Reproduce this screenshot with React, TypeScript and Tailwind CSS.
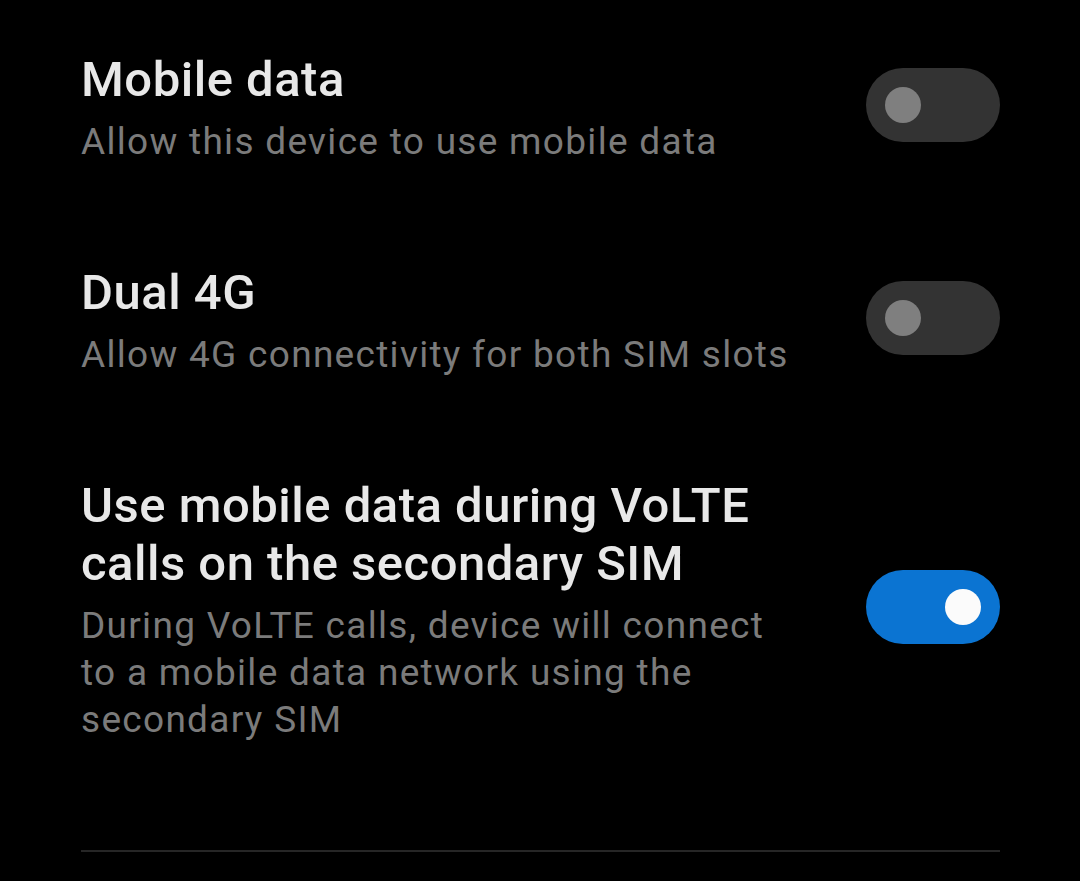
import React from 'react';

interface SettingRowProps {
  title: string;
  description: string;
  checked: boolean;
  className?: string;
}

const Toggle = ({ checked }: { checked: boolean }) => (
  <div
    className={`mb-[6px] flex h-[74px] w-[134px] shrink-0 items-center rounded-full px-[19px] ${
      checked ? 'justify-end bg-[#0b74d2]' : 'justify-start bg-[#333333]'
    }`}
  >
    <span
      className={`block h-[36px] w-[36px] rounded-full ${checked ? 'bg-[#fbfbfb]' : 'bg-[#7f7f7f]'}`}
    />
  </div>
);

const SettingRow = ({ title, description, checked, className }: SettingRowProps) => (
  <div className={`flex items-center justify-between ${className ?? ''}`}>
    <div className="w-[720px]">
      <h2 className="text-[49px] font-medium leading-[58px] tracking-[0.5px] text-[#e8e8e8]">{title}</h2>
      <p className="mt-[9px] text-[37px] leading-[47px] tracking-[1.3px] text-[#7b7b7b]">{description}</p>
    </div>
    <Toggle checked={checked} />
  </div>
);

export default function App() {
  return (
    <div
      className="h-[881px] w-[1080px] overflow-hidden bg-black pl-[81px] pr-[80px] pt-[51px]"
      style={{ fontFamily: 'Roboto, "Noto Sans", sans-serif' }}
    >
      <SettingRow
        title="Mobile data"
        description="Allow this device to use mobile data"
        checked={false}
      />
      <SettingRow
        className="mt-[99px]"
        title="Dual 4G"
        description="Allow 4G connectivity for both SIM slots"
        checked={false}
      />
      <SettingRow
        className="mt-[99px]"
        title="Use mobile data during VoLTE calls on the secondary SIM"
        description="During VoLTE calls, device will connect to a mobile data network using the secondary SIM"
        checked={true}
      />
      <div className="mt-[107px] h-[2px] bg-[#262626]" />
    </div>
  );
}
